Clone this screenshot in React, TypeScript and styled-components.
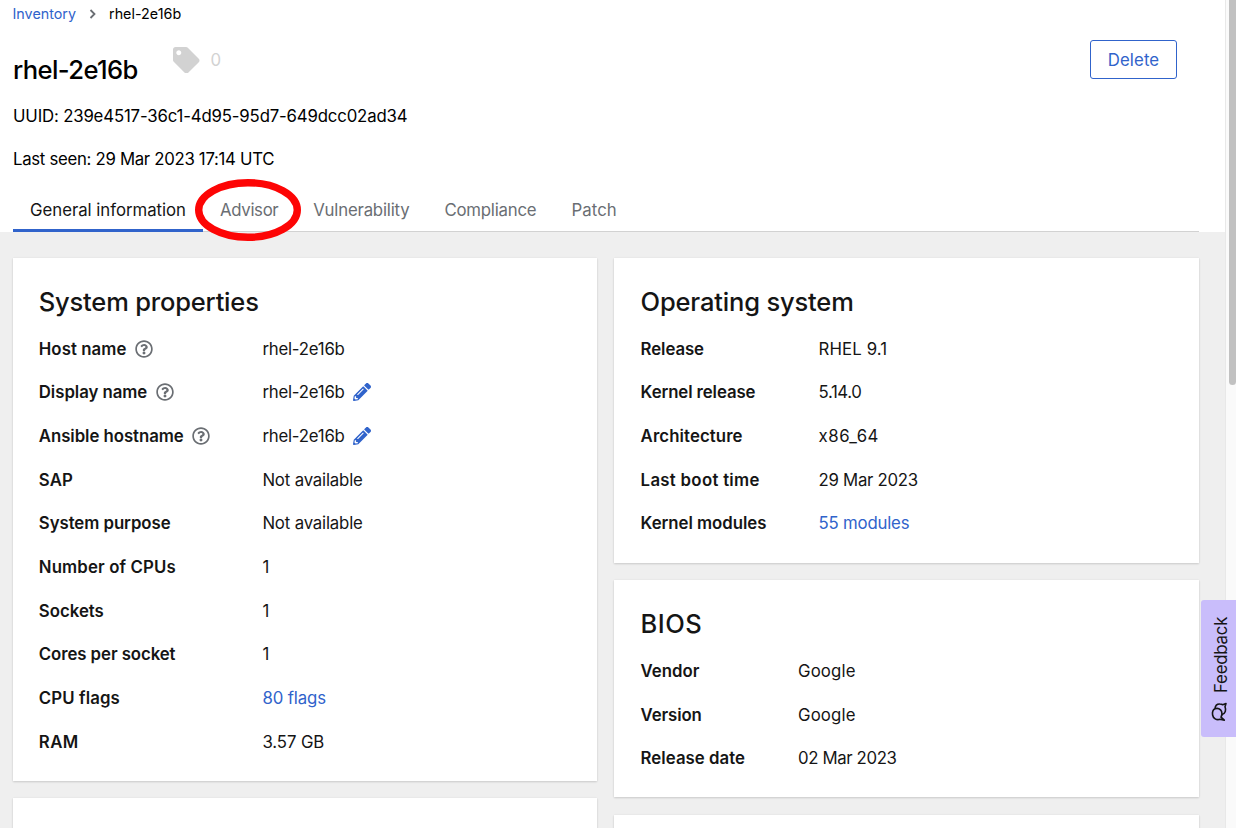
import React from 'react';
import styled, { createGlobalStyle, css } from 'styled-components';

const GlobalStyle = createGlobalStyle`
  * { box-sizing: border-box; }
  body {
    margin: 0;
    overflow: hidden;
    background: #fff;
    color: #151515;
    font-family: Inter, "Liberation Sans", sans-serif;
    font-size: 16.8px;
    line-height: 26.2px;
  }
  h1, h2, p, dl, dt, dd { margin: 0; font-weight: 400; }
  button { font: inherit; background: none; cursor: pointer; }
`;

const BLUE = '#3063cb';

const Window = styled.div`
  position: relative;
  display: flex;
  width: 1236px;
  height: 828px;
  overflow: hidden;
`;

const Page = styled.div`
  flex: 1;
  display: flex;
  flex-direction: column;
  background: #efefef;
`;

const ScrollTrack = styled.div`
  width: 11px;
  padding-left: 3px;
  background: #fafafa;
  border-left: 1px solid #e8e8e8;
`;

const ScrollThumb = styled.div`
  height: 385px;
  background: #c1c1c1;
  border-radius: 0 0 4px 4px;
`;

const Text = styled.span<{ $track?: number }>`
  white-space: nowrap;
  letter-spacing: ${({ $track = 0 }) => $track}px;
`;

const Header = styled.header`
  display: flex;
  flex-direction: column;
  flex: none;
  height: 232px;
  padding: 2px 26px 0 13px;
  background: #fff;
  color: #000;
`;

const Breadcrumb = styled.nav`
  display: flex;
  align-items: center;
  height: 24px;
  font-size: 14.3px;
`;

const Crumb = styled.a`
  width: 63px;
  margin-left: -0.5px;
  color: ${BLUE};
`;

const CrumbArrow = styled.svg`
  width: 8px;
  height: 10px;
  margin: 0 12.5px 0 13px;
`;

const TitleRow = styled.div`
  display: flex;
  height: 77px;
`;

const Title = styled.h1`
  width: 160px;
  padding-top: 26px;
  font-size: 25.6px;
  font-weight: 500;
  line-height: 36px;
`;

const TagCount = styled.div`
  display: flex;
  align-items: center;
  gap: 11px;
  height: 26px;
  margin-top: 21px;
  color: #d2d2d2;
`;

const DeleteButton = styled.button`
  width: 87px;
  height: 39px;
  margin: 14px 22px 0 auto;
  padding: 1px 0 0;
  color: ${BLUE};
  border: 1px solid ${BLUE};
  border-radius: 3px;
`;

const Meta = styled.p`
  height: 43.4px;
`;

const Tabs = styled.div`
  display: flex;
  flex: none;
  height: 44px;
  margin-top: -2px;
  border-bottom: 1px solid #d2d2d2;
`;

const Tab = styled.button<{ $active?: boolean; $width: number }>`
  width: ${({ $width }) => $width}px;
  height: 44px;
  padding: 0 0 0 17px;
  border: 0;
  text-align: left;
  color: ${({ $active }) => ($active ? '#151515' : '#6a6e73')};
  ${({ $active }) => $active && css`box-shadow: inset 0 -3px ${BLUE};`}
`;

const Columns = styled.main`
  display: grid;
  grid-template-columns: 584px 585px;
  gap: 17px;
  align-items: start;
  padding: 26px 0 0 13px;
`;

const Column = styled.div`
  display: flex;
  flex-direction: column;
  gap: 17.3px;
`;

const Card = styled.section<{ $height: number; $inset?: number }>`
  height: ${({ $height }) => $height}px;
  padding: 26px 26px 0 ${({ $inset = 26 }) => $inset}px;
  background: #fff;
  box-shadow: 0 1px 2px rgba(3, 3, 3, 0.14), 0 0 2px rgba(3, 3, 3, 0.06);
`;

const CardTitle = styled.h2`
  height: 51.8px;
  font-size: 25.5px;
  font-weight: 500;
  line-height: 36px;
`;

const Properties = styled.dl`
  display: flex;
  flex-direction: column;
  gap: 17.47px;
`;

const Property = styled.div<{ $labelWidth: number }>`
  display: grid;
  grid-template-columns: ${({ $labelWidth }) => $labelWidth}px 1fr;
  height: 26.2px;
`;

const Label = styled.dt`
  display: flex;
  align-items: center;
  gap: 8.8px;
  && { font-weight: 600; }
`;

const Value = styled.dd<{ $link?: boolean }>`
  display: flex;
  align-items: center;
  gap: 8px;
  color: ${({ $link }) => ($link ? BLUE : 'inherit')};
`;

const RowIcon = styled.svg`
  width: 18px;
  height: 18px;
  margin-bottom: 0.8px;
`;

const Highlight = styled.svg`
  position: absolute;
  left: 194px;
  top: 178px;
  width: 108px;
  height: 64px;
  pointer-events: none;
`;

const FeedbackTab = styled.button`
  position: absolute;
  right: 0;
  top: 600px;
  display: flex;
  flex-direction: column;
  align-items: center;
  gap: 9px;
  width: 35px;
  height: 137px;
  padding: 17px 0 0 4px;
  color: #151515;
  background: #c9bdfb;
  border: 0;
  border-radius: 3px 0 0 3px;
`;

const FeedbackLabel = styled.span`
  height: 76px;
  writing-mode: vertical-rl;
  transform: rotate(180deg);
  letter-spacing: -0.2px;
  line-height: 26px;
`;

const ChatGlyph = styled.svg`
  width: 16px;
  height: 19px;
  margin-right: 3px;
`;

const HelpIcon = () => (
  <RowIcon viewBox="0 0 512 512" fill="#6a6e73">
    <path d="M256 8C119 8 8 119 8 256s111 248 248 248 248-111 248-248S393 8 256 8zm0 448c-110.500 0-200-89.400-200-200 0-110.500 89.500-200 200-200 110.500 0 200 89.500 200 200 0 110.500-89.400 200-200 200zm107.200-255.200c0 67.100-72.400 68.100-72.400 92.900V300c0 6.600-5.400 12-12 12h-45.600c-6.600 0-12-5.400-12-12v-8.700c0-35.700 27.100-50 47.600-61.500 17.600-9.800 28.300-16.500 28.300-29.600 0-17.200-22-28.700-39.800-28.700-23.200 0-33.900 11-49 30-4.100 5.100-11.500 6.100-16.700 2.100l-27.800-21.100c-5.100-3.900-6.300-11-2.600-16.400C184.800 131.500 214.900 112 261.800 112c49.100 0 101.500 38.300 101.500 88.800zM298 368c0 23.200-18.800 42-42 42s-42-18.800-42-42 18.800-42 42-42 42 18.800 42 42z" />
  </RowIcon>
);

const PencilIcon = () => (
  <RowIcon viewBox="0 0 512 512" fill={BLUE}>
    <path d="M497.900 142.100l-46.100 46.100c-4.700 4.700-12.300 4.700-17 0l-111-111c-4.700-4.700-4.700-12.300 0-17l46.100-46.100c18.700-18.700 49.100-18.700 67.900 0l60.100 60.100c18.800 18.700 18.800 49.100 0 67.900zM284.200 99.800L21.600 362.400.4 483.900c-2.900 16.400 11.400 30.600 27.800 27.800l121.500-21.300 262.600-262.600c4.700-4.700 4.700-12.300 0-17l-111-111c-4.800-4.700-12.400-4.700-17.100 0zM124.100 339.900c-5.500-5.500-5.500-14.300 0-19.800l154-154c5.500-5.500 14.300-5.500 19.800 0s5.500 14.300 0 19.800l-154 154c-5.500 5.500-14.300 5.500-19.800 0zM88 424h48v36.300l-64.500 11.300-31.100-31.100L51.700 376H88v48z" />
  </RowIcon>
);

const TagIcon = () => (
  <svg width="26.500" height="26.500" viewBox="0 0 512 512" fill="#d2d2d2">
    <path d="M0 252.118V48C0 21.490 21.490 0 48 0h204.118a48 48 0 0 1 33.941 14.059l211.882 211.882c18.745 18.745 18.745 49.137 0 67.882L293.823 497.941c-18.745 18.745-49.137 18.745-67.882 0L14.059 286.059A48 48 0 0 1 0 252.118zM112 64c-26.510 0-48 21.490-48 48s21.490 48 48 48 48-21.490 48-48-21.490-48-48-48z" />
  </svg>
);

const ChatIcon = () => (
  <ChatGlyph viewBox="0 0 16 19" fill="none" stroke="#151515" strokeWidth="1.600" strokeLinejoin="round">
    <path d="M4 6.800C6.500 5.700 9.600 6.800 10.600 9.500c.8 2.200.4 4.200-.6 5.600l3.300 3-4.300-.8C5.400 18.400 2.200 16.400 1.600 13 1.200 10.400 2 7.800 4 6.800z" />
    <path d="M4 6.600C4.300 3.600 6.300 1.900 8.800 2c1.100 0 2.100.3 2.900.8L15 1.600l-1 3.200c1.300 3 .5 6.800-3.100 7.800" />
  </ChatGlyph>
);

type Item = { label: string; value: string; lt?: number; vt?: number; help?: boolean; edit?: boolean; link?: boolean };

const systemProperties: Item[] = [
  { label: 'Host name', value: 'rhel-2e16b', lt: 0.06, vt: -0.22, help: true },
  { label: 'Display name', value: 'rhel-2e16b', lt: -0.05, vt: -0.22, help: true, edit: true },
  { label: 'Ansible hostname', value: 'rhel-2e16b', lt: -0.05, vt: -0.22, help: true, edit: true },
  { label: 'SAP', value: 'Not available', lt: 0.1, vt: -0.17 },
  { label: 'System purpose', value: 'Not available', lt: -0.05, vt: -0.17 },
  { label: 'Number of CPUs', value: '1', lt: 0.14 },
  { label: 'Sockets', value: '1' },
  { label: 'Cores per socket', value: '1', lt: -0.07 },
  { label: 'CPU flags', value: '80 flags', lt: 0.12, vt: -0.12, link: true },
  { label: 'RAM', value: '3.57 GB', lt: 0.4, vt: -0.1 },
];

const operatingSystem: Item[] = [
  { label: 'Release', value: 'RHEL 9.1', lt: -0.08, vt: 0.12 },
  { label: 'Kernel release', value: '5.14.0', lt: -0.1, vt: -0.4 },
  { label: 'Architecture', value: 'x86_64', lt: 0.1, vt: 0.5 },
  { label: 'Last boot time', value: '29 Mar 2023', lt: 0.3, vt: -0.3 },
  { label: 'Kernel modules', value: '55 modules', lt: -0.04, vt: -0.21, link: true },
];

const bios: Item[] = [
  { label: 'Vendor', value: 'Google', vt: 0.15 },
  { label: 'Version', value: 'Google', lt: -0.11, vt: 0.15 },
  { label: 'Release date', value: '02 Mar 2023', lt: 0.04, vt: -0.36 },
];

const tabs = [
  { name: 'General information', width: 190, track: -0.03, active: true },
  { name: 'Advisor', width: 93.2, track: -0.33 },
  { name: 'Vulnerability', width: 131.2, track: -0.19 },
  { name: 'Compliance', width: 127, track: -0.21 },
  { name: 'Patch', width: 80, track: 0.1 },
];

const PropertyCard = ({ title, track, items, labelWidth, height, inset }: {
  title: string; track: number; items: Item[]; labelWidth: number; height: number; inset?: number;
}) => (
  <Card $height={height} $inset={inset}>
    <CardTitle><Text $track={track}>{title}</Text></CardTitle>
    <Properties>
      {items.map((item) => (
        <Property key={item.label} $labelWidth={labelWidth}>
          <Label>
            <Text $track={item.lt}>{item.label}</Text>
            {item.help && <HelpIcon />}
          </Label>
          <Value $link={item.link}>
            <Text $track={item.vt}>{item.value}</Text>
            {item.edit && <PencilIcon />}
          </Value>
        </Property>
      ))}
    </Properties>
  </Card>
);

export default function App() {
  return (
    <Window>
      <GlobalStyle />
      <Page>
        <Header>
          <Breadcrumb>
            <Crumb><Text $track={0.02}>Inventory</Text></Crumb>
            <CrumbArrow viewBox="0 0 8 10" fill="none" stroke="#6a6e73" strokeWidth="1.800">
              <path d="M1.500 1l4 4-4 4" />
            </CrumbArrow>
            <Text $track={0.02}>rhel-2e16b</Text>
          </Breadcrumb>
          <TitleRow>
            <Title><Text $track={-0.6}>rhel-2e16b</Text></Title>
            <TagCount>
              <TagIcon />
              <Text>0</Text>
            </TagCount>
            <DeleteButton><Text $track={0.1}>Delete</Text></DeleteButton>
          </TitleRow>
          <Meta><Text $track={-0.17}>UUID: 239e4517-36c1-4d95-95d7-649dcc02ad34</Text></Meta>
          <Meta><Text $track={-0.31}>Last seen: 29 Mar 2023 17:14 UTC</Text></Meta>
          <Tabs>
            {tabs.map((tab) => (
              <Tab key={tab.name} $width={tab.width} $active={tab.active}>
                <Text $track={tab.track}>{tab.name}</Text>
              </Tab>
            ))}
          </Tabs>
        </Header>
        <Columns>
          <Column>
            <PropertyCard title="System properties" track={-0.19} items={systemProperties} labelWidth={223.600} height={523} inset={25.800} />
            <Card $height={200} />
          </Column>
          <Column>
            <PropertyCard title="Operating system" track={-0.17} items={operatingSystem} labelWidth={178} height={305} inset={26.600} />
            <PropertyCard title="BIOS" track={0.5} items={bios} labelWidth={157.400} height={217} inset={26.600} />
            <Card $height={200} />
          </Column>
        </Columns>
      </Page>
      <ScrollTrack><ScrollThumb /></ScrollTrack>
      <Highlight viewBox="0 0 108 64">
        <ellipse cx="54" cy="32" rx="49.300" ry="27.300" fill="none" stroke="#fd0505" strokeWidth="7.400" />
      </Highlight>
      <FeedbackTab>
        <FeedbackLabel>Feedback</FeedbackLabel>
        <ChatIcon />
      </FeedbackTab>
    </Window>
  );
}
